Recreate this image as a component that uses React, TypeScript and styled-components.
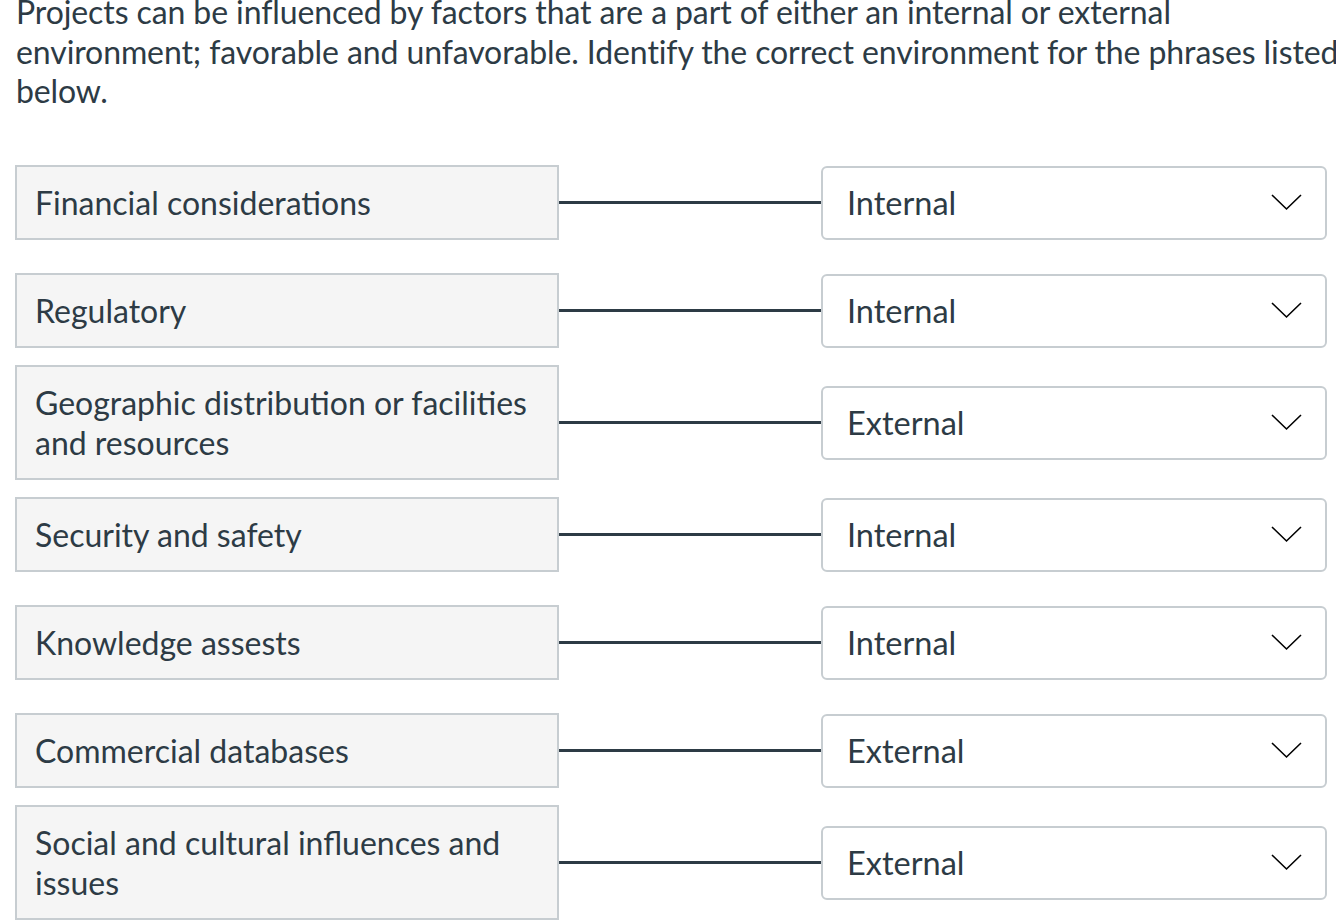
import React from "react";
import styled, { createGlobalStyle } from "styled-components";

const Global = createGlobalStyle`
  html, body {
    margin: 0;
    padding: 0;
    background: #ffffff;
    overflow: hidden;
  }
  body {
    font-family: Lato, "Noto Sans", "Liberation Sans", sans-serif;
    color: #2d3b45;
  }
`;

const Page = styled.div`
  width: 1400px;
  margin-top: -8px;
  padding-left: 15px;
  box-sizing: border-box;
`;

const Prompt = styled.p`
  margin: 0 0 38.5px 1px;
  width: 1335px;
  font-size: 32px;
  line-height: 39.5px;
  letter-spacing: -0.1px;
  color: #2d3b45;
`;

const Rows = styled.div`
  display: flex;
  flex-direction: column;
  gap: 1px;
`;

const Row = styled.div`
  display: grid;
  grid-template-columns: 544px 262px 506px;
  align-items: center;
  min-height: 107px;
`;

const Term = styled.div`
  box-sizing: border-box;
  background: #f5f5f5;
  border: 2px solid #c7cdd1;
  padding: 15.5px 18px;
  font-size: 32px;
  line-height: 40px;
  color: #2d3b45;
`;

const Connector = styled.div`
  height: 3px;
  background: #2d3b45;
`;

const Select = styled.div`
  box-sizing: border-box;
  height: 74px;
  border: 2px solid #c7cdd1;
  border-radius: 6px;
  background: #ffffff;
  display: flex;
  align-items: center;
  justify-content: space-between;
  padding: 0 23px 0 24px;
  font-size: 32.5px;
  color: #2d3b45;
`;

const Chevron = () => (
  <svg width="31" height="17" viewBox="0 0 31 17" fill="none">
    <polyline points="1,1 15.5,15 30,1" stroke="#000" strokeWidth="1.6" />
  </svg>
);

const items: [string, string][] = [
  ["Financial considerations", "Internal"],
  ["Regulatory", "Internal"],
  ["Geographic distribution or facilities and resources", "External"],
  ["Security and safety", "Internal"],
  ["Knowledge assests", "Internal"],
  ["Commercial databases", "External"],
  ["Social and cultural influences and issues", "External"],
];

export default function App() {
  return (
    <>
      <Global />
      <Page>
        <Prompt>
          Projects can be influenced by factors that are a part of either an internal or external
          environment; favorable and unfavorable. Identify the correct environment for the phrases
          listed below.
        </Prompt>
        <Rows>
          {items.map(([term, value]) => (
            <Row key={term}>
              <Term>{term}</Term>
              <Connector />
              <Select>
                <span>{value}</span>
                <Chevron />
              </Select>
            </Row>
          ))}
        </Rows>
      </Page>
    </>
  );
}
